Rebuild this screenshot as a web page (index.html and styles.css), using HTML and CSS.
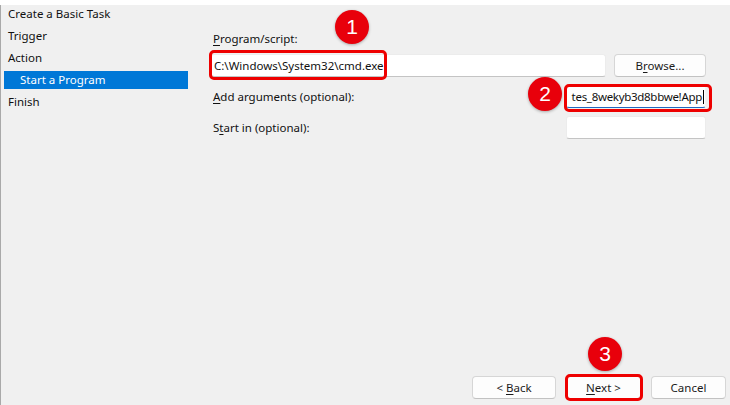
FILE: index.html
```html
<!DOCTYPE html>
<html lang="en">

<head>
    <meta charset="UTF-8">
    <meta name="viewport" content="width=device-width, initial-scale=1.0">
    <title>Create Basic Task Wizard</title>
    <link rel="stylesheet" href="styles.css">
</head>

<body>
    <div class="top-strip"></div>

    <div class="wizard">
        <!-- Steps -->
        <ul class="steps">
            <li class="step">Create a Basic Task</li>
            <li class="step">Trigger</li>
            <li class="step">Action</li>
            <li class="step sub"><span class="step-active">Start a Program</span></li>
            <li class="step">Finish</li>
        </ul>

        <!-- Action settings -->
        <div class="panel">
            <div class="field-label first"><u>P</u>rogram/script:</div>
            <div class="row">
                <div class="textbox wide">C:\Windows\System32\cmd.exe</div>
                <button class="btn browse">B<u>r</u>owse...</button>
            </div>
            <div class="row">
                <span class="row-label"><u>A</u>dd arguments (optional):</span>
                <div class="textbox narrow focused"><span class="tight">tes_8wekyb3d8bbwe!App</span><i class="caret"></i></div>
            </div>
            <div class="row">
                <span class="row-label">S<u>t</u>art in (optional):</span>
                <div class="textbox narrow"></div>
            </div>
        </div>

        <!-- Buttons -->
        <div class="footer">
            <button class="btn back">&lt; <u>B</u>ack</button>
            <button class="btn"><u>N</u>ext &gt;</button>
            <button class="btn">Cancel</button>
        </div>
    </div>

    <!-- Annotations -->
    <div class="mark box-program"></div>
    <div class="mark box-args"></div>
    <div class="mark box-next"></div>
    <div class="badge badge-1">1</div>
    <div class="badge badge-2">2</div>
    <div class="badge badge-3">3</div>
</body>

</html>
```

FILE: styles.css
```css
* {
    margin: 0;
    padding: 0;
    box-sizing: border-box;
}

body {
    position: relative;
    width: 730px;
    height: 405px;
    overflow: hidden;
    background-color: #f0f0f0;
    color: #111111;
    font-family: "Noto Sans", "Open Sans", sans-serif;
    font-size: 11.5px;
}

u {
    text-decoration-thickness: 1px;
    text-underline-offset: 2px;
}

.top-strip {
    height: 5px;
    background-color: #ffffff;
}

.wizard {
    display: grid;
    grid-template-columns: 190px 1fr;
    grid-template-rows: 1fr auto;
    height: 400px;
    border-left: 1px solid #a9a9a9;
}

/* Steps list */
.steps {
    list-style: none;
}

.step {
    height: 22px;
    line-height: 18px;
    padding-left: 7px;
}

.step.sub {
    padding-left: 3px;
}

.step-active {
    display: block;
    width: 184px;
    height: 18px;
    padding-left: 16px;
    background-color: #0078d7;
    color: #ffffff;
}

/* Panel */
.panel {
    padding: 0 24px 0 20px;
}

.field-label {
    line-height: 16px;
    padding-left: 2px;
}

.field-label.first {
    margin-top: 26px;
    margin-bottom: 7px;
}

.row {
    display: flex;
    align-items: center;
    gap: 8px;
    height: 23px;
    margin-bottom: 8px;
}

.row-label {
    flex: 1;
    padding-left: 2px;
}

.textbox {
    display: flex;
    align-items: center;
    height: 23px;
    padding: 0 2px;
    background-color: #ffffff;
    border: 1px solid #ececec;
    border-bottom-color: #c4c4c4;
    border-radius: 3px;
    white-space: nowrap;
    overflow: hidden;
}

.textbox.wide {
    flex: 1;
}

.textbox.narrow {
    width: 140px;
    justify-content: flex-end;
}

.textbox.focused {
    border-color: #f4f4f4;
    border-bottom: 1px solid #1f68c0;
    padding-right: 1px;
}

.tight {
    letter-spacing: -0.3px;
}

.caret {
    display: block;
    width: 1px;
    height: 14px;
    margin-left: 1px;
    background-color: #000000;
}

.btn {
    height: 23px;
    width: 75px;
    background-color: #fdfdfd;
    border: 1px solid #d6d6d6;
    border-bottom-color: #c2c2c2;
    border-radius: 4px;
    color: #1b1b1b;
    font-family: inherit;
    font-size: 11.5px;
}

.btn.browse {
    width: 92px;
}

.btn.back {
    width: 84px;
}

.footer {
    grid-column: 1 / 3;
    display: flex;
    justify-content: flex-end;
    gap: 10px;
    padding: 0 4px 6px 0;
}

/* Annotations */
.mark {
    position: absolute;
    border: 3px solid #ee0000;
    border-radius: 5px;
}

.box-program {
    left: 209px;
    top: 50px;
    width: 178px;
    height: 30px;
}

.box-args {
    left: 564px;
    top: 84px;
    width: 148px;
    height: 28px;
}

.box-next {
    left: 565px;
    top: 374px;
    width: 78px;
    height: 27px;
}

.badge {
    position: absolute;
    width: 34px;
    height: 34px;
    border-radius: 50%;
    background-color: #e8000b;
    color: #ffffff;
    font-family: "Liberation Sans", Arial, sans-serif;
    font-size: 21px;
    line-height: 34px;
    text-align: center;
    box-shadow: 0 1px 3px rgba(0, 0, 0, 0.3);
}

.badge-1 {
    left: 335px;
    top: 10px;
}

.badge-2 {
    left: 528px;
    top: 77px;
}

.badge-3 {
    left: 588px;
    top: 337px;
}
```
